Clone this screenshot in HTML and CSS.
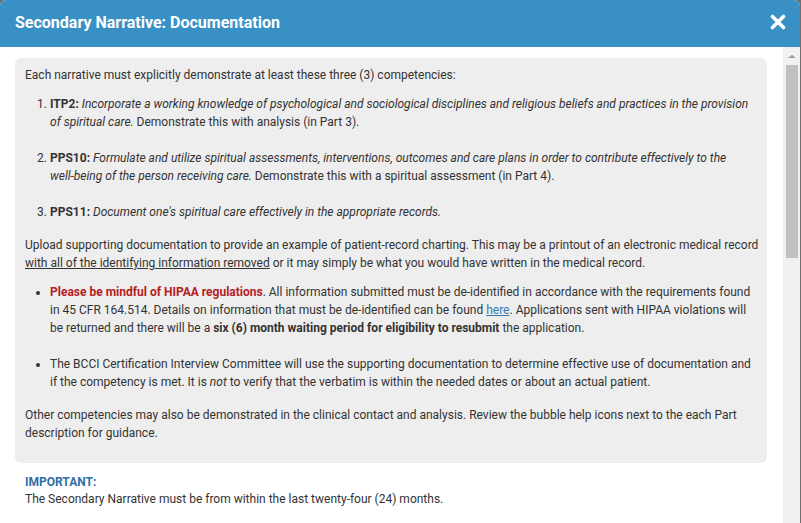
FILE: index.html
```html
<!DOCTYPE html>
<html lang="en">
<head>
    <meta charset="UTF-8">
    <meta name="viewport" content="width=device-width, initial-scale=1.0">
    <title>Secondary Narrative: Documentation</title>
    <link rel="stylesheet" href="styles.css">
</head>
<body>
    <div class="modal">
        <div class="modal-header">
            <h2 class="modal-title">Secondary Narrative: Documentation</h2>
            <button class="close-btn" aria-label="Close">
                <svg width="16" height="16" viewBox="0 0 16 16">
                    <path d="M2.5 2.5 L13.5 13.5 M13.5 2.5 L2.5 13.5" stroke="#fff" stroke-width="3.6" stroke-linecap="round"/>
                </svg>
            </button>
        </div>

        <div class="modal-body">
            <div class="modal-content">
                <div class="info-box">
                    <p>Each narrative must explicitly demonstrate at least these three (3) competencies:</p>
                    <ol class="competencies">
                        <li><strong>ITP2:</strong> <em>Incorporate a working knowledge of psychological and sociological disciplines and religious beliefs and practices in the provision<br>of spiritual care.</em> Demonstrate this with analysis (in Part 3).</li>
                        <li><strong>PPS10:</strong> <em>Formulate and utilize spiritual assessments, interventions, outcomes and care plans in order to contribute effectively to the <span class="nowrap">well-being</span> of the person receiving care.</em> Demonstrate this with a spiritual assessment (in Part 4).</li>
                        <li><strong>PPS11:</strong> <em>Document one's spiritual care effectively in the appropriate records.</em></li>
                    </ol>
                    <p>Upload supporting documentation to provide an example of patient-record charting. This may be a printout of an electronic medical record <u>with all of the identifying information removed</u> or it may simply be what you would have written in the medical record.</p>
                    <ul class="notes">
                        <li><strong class="warn">Please be mindful of HIPAA regulations</strong>. All information submitted must be de-identified in accordance with the requirements found<br>in 45 CFR 164.514. Details on information that must be de-identified can be found <a href="#">here</a>. Applications sent with HIPAA violations will<br>be returned and there will be a <strong>six (6) month waiting period for eligibility to resubmit</strong> the application.</li>
                        <li>The BCCI Certification Interview Committee will use the supporting documentation to determine effective use of documentation and<br>if the competency is met. It is <em>not</em> to verify that the verbatim is within the needed dates or about an actual patient.</li>
                    </ul>
                    <p>Other competencies may also be demonstrated in the clinical contact and analysis. Review the bubble help icons next to the each Part description for guidance.</p>
                </div>

                <div class="important">
                    <h4>IMPORTANT:</h4>
                    <p>The Secondary Narrative must be from within the last twenty-four (24) months.</p>
                </div>
            </div>

            <div class="scrollbar">
                <div class="scroll-up"></div>
                <div class="scroll-thumb"></div>
            </div>
        </div>
    </div>
</body>
</html>
```

FILE: styles.css
```css
html, body {
    margin: 0;
    height: 100%;
    overflow: hidden;
}

body {
    background: #6e6e6e;
    font-family: Roboto, "Liberation Sans", Arial, sans-serif;
    font-size: 12px;
    line-height: 18px;
    color: #333;
}

.modal {
    width: 800px;
    height: 100%;
    display: flex;
    flex-direction: column;
    background: #fff;
    border-radius: 6px 6px 0 0;
    overflow: hidden;
}

.modal-header {
    height: 47px;
    flex-shrink: 0;
    background: #3990c5;
    display: flex;
    align-items: center;
    justify-content: space-between;
    padding: 0 14px 0 15px;
    box-sizing: border-box;
}

.modal-title {
    margin: 0;
    color: #fff;
    font-size: 16px;
    font-weight: bold;
    line-height: 20px;
    padding-bottom: 2px;
}

.close-btn {
    background: none;
    border: none;
    padding: 0;
    width: 16px;
    height: 16px;
    cursor: pointer;
    margin-bottom: 3px;
}

.close-btn svg {
    display: block;
}

.modal-body {
    flex: 1;
    display: flex;
    overflow: hidden;
}

.modal-content {
    flex: 1;
    padding: 11px 16px 0 15px;
}

.scrollbar {
    width: 17px;
    flex-shrink: 0;
    background: #f1f1f1;
    display: flex;
    flex-direction: column;
    align-items: center;
}

.scroll-up {
    width: 17px;
    height: 17px;
    background: conic-gradient(from 135deg at 50% 0, #a3a3a3 90deg, transparent 0) 50% 7px / 8px 4px no-repeat;
}

.scroll-thumb {
    width: 12px;
    height: 193px;
    margin-top: 1px;
    background: #c1c1c1;
}

.info-box {
    background: #eeeeee;
    border-radius: 6px;
    padding: 8px 4px 10px 10px;
}

.info-box p {
    margin: 0 0 11px;
}

.info-box ol,
.info-box ul {
    margin: 0 0 15px;
    padding-left: 25px;
}

.info-box li + li {
    margin-top: 18px;
}

.nowrap {
    white-space: nowrap;
}

.warn {
    color: #b52025;
}

.info-box a {
    color: #337ab7;
}

.important {
    padding: 10px 10px 0;
}

.important h4 {
    margin: 0;
    color: #2f6fa8;
    font-size: 12px;
    line-height: 18px;
}

.important p {
    margin: 0;
    line-height: 16px;
}
```
